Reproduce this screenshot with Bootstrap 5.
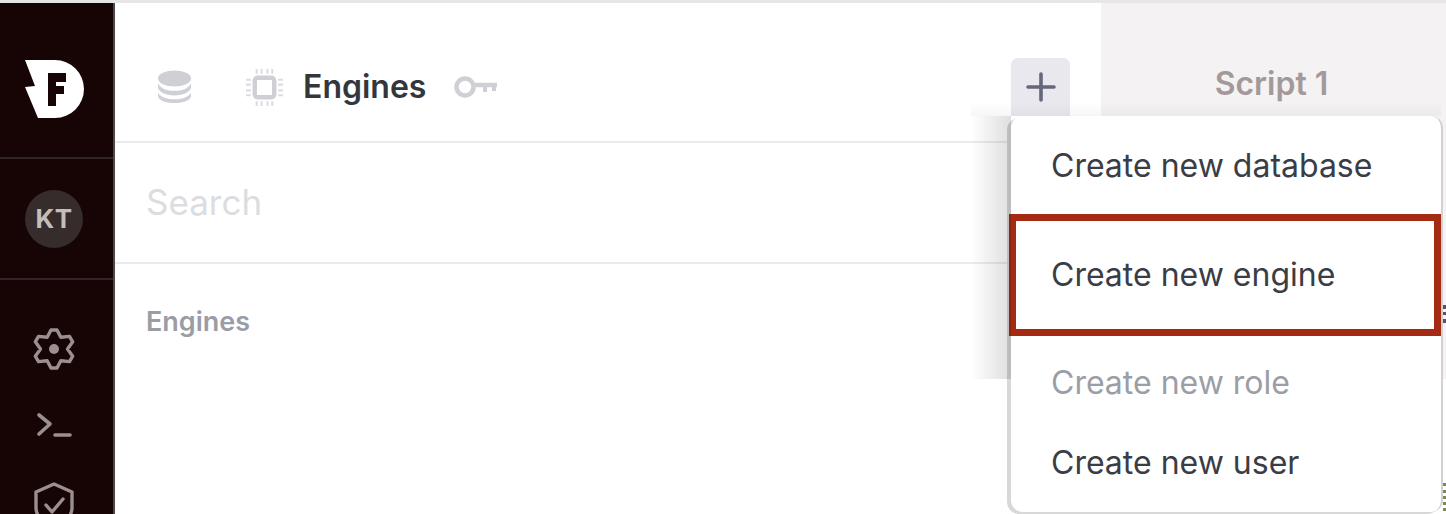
<!DOCTYPE html>
<html lang="en">
<head>
<meta charset="utf-8">
<title>Engines</title>
<link rel="stylesheet" href="https://cdn.jsdelivr.net/npm/bootstrap@5.3.0/dist/css/bootstrap.min.css">
<style>
html,body{height:100%;overflow:hidden;background:#fff}
body{font-family:Inter,"Liberation Sans",sans-serif;border-top:3px solid #e6e6e6}
.app-shell{height:100%}
.rail{width:115px;flex:none;background:#170405;border-right:2px solid #4f4748;color:#9c8f90}
.rail-logo{height:156px;border-bottom:2px solid #2f2526;padding:16px 5px 0 0}
.rail-user{height:121px;border-bottom:2px solid #2f2526;padding-right:5px}
.avatar{width:58px;height:58px;border-radius:50%;background:#362c2c;color:#c4bdbd;font-size:26px;font-weight:700;letter-spacing:.5px}
.rail-tools{padding:48px 5px 0 0;gap:42px}
.list-pane{width:986px;flex:none}
.pane-head{height:140px;border-bottom:2px solid #ebebec;padding-left:42px;padding-top:30px}
.head-title{font-size:32px;font-weight:600;color:#34363d;margin:0 28px 0 20px}
.chip-ico{margin-left:54px}
.add-wrap{position:absolute;left:1011px;top:55px;width:59px}
.add-btn{width:59px;height:58px;background:#e9e8ee;border-radius:7px 7px 0 0;border:0;padding:0}
.search-row{height:121px;border-bottom:2px solid #ebebec;padding-left:31px}
.search-field{font-size:35px;border:0;padding:0;outline:0;width:400px;color:#34363d}
.search-field::placeholder{color:#dcdde0;opacity:1}
.group-label{font-size:27px;font-weight:600;color:#9a9da6;padding:38px 0 0 31px}
.script-pane{background:#f4f2f3;height:376px}
.script-tab{padding-top:62px;font-size:32px;font-weight:600;color:#a3999a;line-height:1.2;text-align:center;padding-right:4px}
.menu-panel.dropdown-menu{position:absolute;left:0;top:58px;width:432px;height:396px;padding:0;margin:0;border:0;border-right:2px solid #d2d2d2;border-radius:12px;box-shadow:-4px 2px 0 #d8d8d8;background:#fff;z-index:5}
.menu-panel::before{content:"";position:absolute;left:-40px;top:0;width:40px;height:263px;background:linear-gradient(90deg,rgba(0,0,0,0),rgba(0,0,0,.13))}
.menu-panel::after{content:"";position:absolute;left:-40px;right:0;top:-14px;height:14px;background:linear-gradient(180deg,rgba(0,0,0,0),rgba(0,0,0,.035));pointer-events:none}
.menu-entry.dropdown-item{display:flex;align-items:center;padding:0 0 0 40px;font-size:32px;color:#3a3d45;background:transparent}
.menu-entry.dropdown-item.disabled{color:#9b9ea6}
.entry-a{height:98px;padding-top:2px!important}
.entry-b{height:122px;margin-left:-2px;width:calc(100% + 2px);padding-left:35px!important;border:7px solid #a52a13}
.entry-c{height:93px}
.entry-d{height:67px}
.edge-dots{position:absolute;right:0;width:3px;border-left:3px dotted #55565c}
.edge-top{top:302px;height:18px}
.edge-low{top:480px;height:28px;border-left-color:#7d8a4e}
</style>
</head>
<body>
<div class="app-shell d-flex position-relative">
  <aside class="rail d-flex flex-column">
    <div class="rail-logo flex-shrink-0 d-flex align-items-center justify-content-center">
      <svg width="60" height="60" viewBox="0 0 60 60" aria-hidden="true"><path fill="#fff" d="M1 2H31A29 29 0 0 1 31 60H14L1 29 11 28Z"/><path fill="#170405" d="M24 15H42V24H32V28H40V36H32V48H24Z"/></svg>
    </div>
    <div class="rail-user flex-shrink-0 d-flex align-items-center justify-content-center">
      <div class="avatar d-flex align-items-center justify-content-center">KT</div>
    </div>
    <div class="rail-tools flex-shrink-0 d-flex flex-column align-items-center">
      <svg width="42" height="42" viewBox="0 0 42 42" fill="none" stroke="#9c8f90" stroke-width="3.4" stroke-linejoin="round" aria-hidden="true"><path d="M18 2H24L27.800 9.300 36.500 8.400 39.700 13.800 34.500 21 39.700 28.200 36.500 33.600 27.800 32.700 24 40H18L14.200 32.700 5.500 33.600 2.300 28.200 7.500 21 2.300 13.800 5.500 8.400 14.200 9.300Z"/><circle cx="21" cy="21" r="5" fill="#9c8f90" stroke="none"/></svg>
      <svg width="36" height="28" viewBox="0 0 36 28" fill="none" stroke="#9c8f90" stroke-width="3.6" stroke-linecap="round" stroke-linejoin="round" aria-hidden="true"><path d="M3 3 14 12 3 22M19 23H34"/></svg>
      <svg width="42" height="46" viewBox="0 0 42 46" fill="none" stroke="#9c8f90" stroke-width="3.4" stroke-linecap="round" stroke-linejoin="round" aria-hidden="true"><path d="M21 2 39 10V26C39 35 30 41 21 44 12 41 3 35 3 26V10ZM13 23 19 30 30 17"/></svg>
    </div>
  </aside>
  <main class="list-pane d-flex flex-column">
    <div class="pane-head flex-shrink-0 d-flex align-items-center">
      <svg width="35" height="34" viewBox="0 0 37 36" fill="#cfd0d5" aria-hidden="true"><ellipse cx="18.500" cy="9" rx="17.500" ry="8.500"/><path d="M1 14C4 20 11 22 18.500 22S33 20 36 14V18C36 23 28 27 18.500 27S1 23 1 18Z"/><path d="M1 24C4 29 11 31 18.500 31S33 29 36 24V27C36 32 28 35 18.500 35S1 32 1 27Z"/></svg>
      <svg class="chip-ico" width="37" height="37" viewBox="0 0 38 38" aria-hidden="true"><rect x="9" y="9" width="20" height="20" rx="3" fill="none" stroke="#cfd0d5" stroke-width="4.500"/><g stroke="#dcdde0" stroke-width="2.200"><path d="M11 0V5M16 0V5M22 0V5M27 0V5M11 33V38M16 33V38M22 33V38M27 33V38M0 11H5M0 16H5M0 22H5M0 27H5M33 11H38M33 16H38M33 22H38M33 27H38"/></g></svg>
      <h1 class="head-title">Engines</h1>
      <svg width="44" height="24" viewBox="0 0 44 24" fill="none" stroke="#cfd0d5" aria-hidden="true"><circle cx="11" cy="12" r="8.500" stroke-width="4.500"/><path d="M20 10H43" stroke-width="4.500"/><path d="M31 11V17M40 11V16" stroke-width="4"/></svg>
    </div>
    <div class="search-row flex-shrink-0 d-flex align-items-center">
      <input class="search-field" type="text" placeholder="Search" aria-label="Search">
    </div>
    <div class="group-label">Engines</div>
  </main>
  <section class="script-pane flex-grow-1">
    <div class="script-tab">Script 1</div>
  </section>
  <div class="add-wrap">
    <button class="add-btn d-flex align-items-center justify-content-center" type="button" aria-label="Add">
      <svg width="30" height="30" viewBox="0 0 30 30" stroke="#656878" stroke-width="3.6" stroke-linecap="round" aria-hidden="true"><path d="M15 2V28M2 15H28"/></svg>
    </button>
    <div class="menu-panel dropdown-menu show">
      <a class="menu-entry dropdown-item entry-a" href="#">Create new database</a>
      <a class="menu-entry dropdown-item entry-b" href="#">Create new engine</a>
      <a class="menu-entry dropdown-item entry-c disabled" href="#">Create new role</a>
      <a class="menu-entry dropdown-item entry-d" href="#">Create new user</a>
    </div>
  </div>
  <span class="edge-dots edge-top"></span>
  <span class="edge-dots edge-low"></span>
</div>
<script src="https://cdn.jsdelivr.net/npm/bootstrap@5.3.0/dist/js/bootstrap.bundle.min.js"></script>
</body>
</html>
